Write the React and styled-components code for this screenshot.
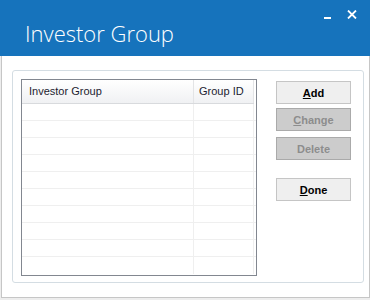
import styled, { createGlobalStyle } from "styled-components";

const GlobalStyle = createGlobalStyle`
  html, body {
    margin: 0;
    padding: 0;
    background: #ededed;
  }
  body {
    font-family: "Liberation Sans", Arial, sans-serif;
  }
  * {
    box-sizing: border-box;
  }
`;

const Window = styled.div`
  width: 370px;
  height: 300px;
  display: flex;
  flex-direction: column;
`;

const TitleBar = styled.div`
  height: 56px;
  background: #1673bc;
  display: flex;
  align-items: flex-start;
  color: #ffffff;
`;

const Title = styled.div`
  font-family: "Open Sans", "Noto Sans", sans-serif;
  font-weight: 300;
  font-size: 22px;
  line-height: 22px;
  padding: 22px 0 0 25px;
`;

const Controls = styled.div`
  margin-left: auto;
  display: flex;
  align-items: flex-start;
  padding: 10px 13px 0 0;
  gap: 16px;
`;

const Minimize = styled.div`
  width: 7px;
  height: 2px;
  margin-top: 7px;
  background: #ffffff;
`;

const Body = styled.div`
  flex: 1;
  margin: 0 0 2px 1px;
  background: #ffffff;
  border-left: 1px solid #c6c6c6;
  border-right: 1px solid #c6c6c6;
  border-bottom: 1px solid #c6c6c6;
  padding: 14px 0 0 10px;
`;

const GroupBox = styled.div`
  width: 352px;
  height: 213px;
  border: 1px solid #d4dde3;
  border-radius: 3px;
  padding: 8px 0 0 8px;
  display: flex;
  align-items: flex-start;
`;

const ListView = styled.div`
  width: 236px;
  height: 197px;
  border: 1px solid #828790;
  background: #ffffff;
  overflow: hidden;
`;

const HeaderRow = styled.div`
  display: flex;
  height: 24px;
  background: linear-gradient(#ffffff, #f0f1f3);
  border-bottom: 1px solid #d8dadd;
  width: 232px;
`;

const HeaderCell = styled.div`
  width: ${(p) => p.$w}px;
  padding-left: ${(p) => p.$pad}px;
  font-size: 11px;
  line-height: 23px;
  color: #1c1c30;
  border-right: 1px solid #e3e4e6;
  white-space: nowrap;
`;

const Row = styled.div`
  display: flex;
  height: 17px;
  border-bottom: 1px solid #efefef;
  &:last-child {
    border-bottom: none;
  }
`;

const Cell = styled.div`
  width: ${(p) => p.$w}px;
  border-right: 1px solid #efefef;
`;

const ButtonColumn = styled.div`
  margin: 2px 0 0 19px;
  display: flex;
  flex-direction: column;
`;

const Button = styled.button`
  width: 75px;
  height: 23px;
  margin-top: ${(p) => p.$gap || 0}px;
  padding: 0;
  font-family: "Liberation Sans", Arial, sans-serif;
  font-weight: bold;
  font-size: 11px;
  color: ${(p) => (p.disabled ? "#8d8d8d" : "#000000")};
  background: ${(p) => (p.disabled ? "#cccccc" : "#efefef")};
  border: 1px solid ${(p) => (p.disabled ? "#aaaaaa" : "#c5c5c5")};
  border-radius: 0;
`;

const rows = Array.from({ length: 10 });

export default function App() {
  return (
    <>
      <GlobalStyle />
      <Window>
        <TitleBar>
          <Title>Investor Group</Title>
          <Controls>
            <Minimize />
            <svg width="10" height="9" viewBox="0 0 10 9">
              <path d="M1 0.5 L9 8.5 M9 0.5 L1 8.5" stroke="#ffffff" strokeWidth="1.8" />
            </svg>
          </Controls>
        </TitleBar>
        <Body>
          <GroupBox>
            <ListView>
              <HeaderRow>
                <HeaderCell $w={172} $pad={7}>Investor Group</HeaderCell>
                <HeaderCell $w={60} $pad={5}>Group ID</HeaderCell>
              </HeaderRow>
              {rows.map((_, i) => (
                <Row key={i}>
                  <Cell $w={172} />
                  <Cell $w={60} />
                </Row>
              ))}
            </ListView>
            <ButtonColumn>
              <Button><u>A</u>dd</Button>
              <Button $gap={4} disabled><u>C</u>hange</Button>
              <Button $gap={6} disabled>Delete</Button>
              <Button $gap={18}><u>D</u>one</Button>
            </ButtonColumn>
          </GroupBox>
        </Body>
      </Window>
    </>
  );
}
